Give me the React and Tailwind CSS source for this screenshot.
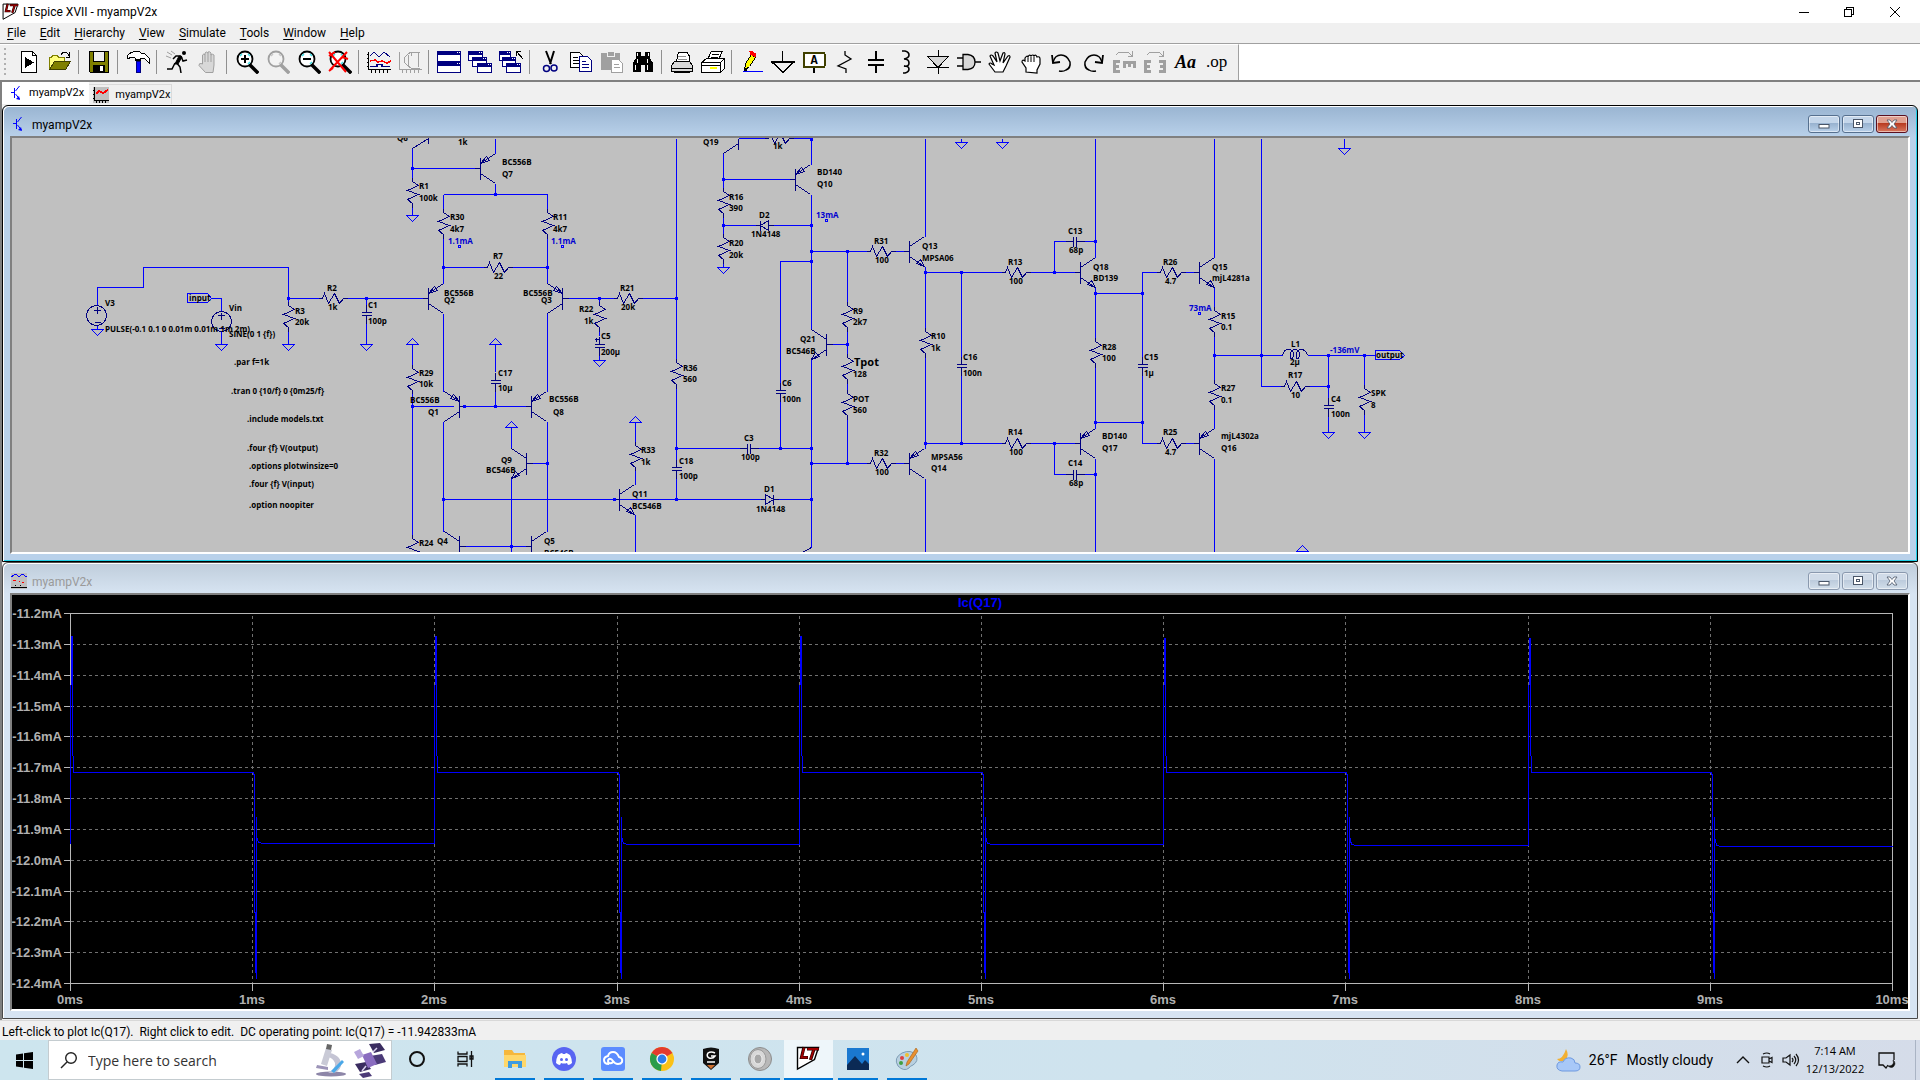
import React from "react";

const BLUE = "#0000ff";
const NAVY = "#000080";

/* ---------- toolbar icons (24 x 24) ---------- */

function Svg({ children, smooth }) {
  return (
    <svg
      width="24"
      height="24"
      viewBox="0 0 24 24"
      fill="none"
      stroke="#000"
      shapeRendering={smooth ? "auto" : "crispEdges"}
      aria-hidden="true"
    >
      {children}
    </svg>
  );
}

function Lens({ color = "#000", glass = "#fff", shine = "#40e0e8", children }) {
  return (
    <Svg smooth>
      <path d="M15 15l7 7" stroke={color} strokeWidth="3.5" strokeLinecap="square" />
      <circle cx="10" cy="9" r="7.5" fill={glass} stroke={color} strokeWidth="1.800" />
      <path d="M5 6l2-2M13 14l2-2M13 4l2 2" stroke={shine} strokeWidth="1.5" />
      {children}
    </Svg>
  );
}

function MiniWindow({ x, y, w = 13, h = 10 }) {
  return (
    <g stroke="none">
      <rect x={x} y={y} width={w} height={h} fill="#000080" />
      <rect x={x + 1} y={y + 4} width={w - 2} height={h - 5} fill="#fff" />
      <rect x={x + w - 4} y={y + 1} width="1" height="1" fill="#fff" />
      <rect x={x + w - 2} y={y + 1} width="1" height="1" fill="#fff" />
    </g>
  );
}

const icons = {
  play: (
    <Svg>
      <path d="M4.500 1.500h11l4 4v17h-15z" fill="#fff" />
      <path d="M15.500 1.500v4h4" />
      <path d="M8 7v11l9-5.500z" fill="#000" stroke="none" />
    </Svg>
  ),
  open: (
    <Svg>
      <path d="M1.500 19V7.500h2l1-2h5l1 2h6v4" fill="#ffff80" stroke="#808000" />
      <path d="M1.500 19.500l5-8h16l-5 8z" fill="#808000" stroke="#404000" />
      <path d="M13 4.500c2-3 6-3 8 1M21.500 2v5h-4" />
    </Svg>
  ),
  save: (
    <Svg>
      <path d="M2.500 1.500h19v21h-18l-1-1z" fill="#808000" />
      <rect x="6.500" y="1.500" width="11" height="10" fill="#f0f0f0" />
      <rect x="6" y="15" width="12" height="7" fill="#000" stroke="none" />
      <rect x="13" y="16" width="3" height="5" fill="#fff" stroke="none" />
    </Svg>
  ),
  hammer: (
    <Svg>
      <path d="M1 6c3-4 7-5 12-5l2 2h3l2 2 3 3v5l-3-3-2-2h-4v2h-5V8L5 7l-3 2z" fill="#fff" />
      <rect x="10" y="11" width="4" height="11" fill="#0000ff" stroke="#000080" />
      <path d="M10 10h5" strokeWidth="2" />
    </Svg>
  ),
  run: (
    <Svg smooth>
      <circle cx="19" cy="3" r="2" fill="#000" stroke="none" />
      <path d="M16 6h-5l-3 3M16 6l2 5 4-1" strokeWidth="1.500" />
      <path d="M11 12l4 5 1 6M10 13l-3 6H2" strokeWidth="1.500" />
      <path d="M14 6l-4 8 3 0 4-7z" fill="#000" />
      <path d="M2 2l5 3M1 6l5 2M6 1l4 3" stroke="#a0a0a0" />
    </Svg>
  ),
  halt: (
    <Svg smooth>
      <path
        d="M6.500 14V5q1.500-2 2.500 0V3q1.500-2 3 0V2q1.500-1 3 1v2q1.500-1.500 3 0v10l-1 7.500H9.500L3 15.500q0-2.500 2-2z"
        fill="#d8d8d8"
        stroke="#a0a0a0"
      />
      <path d="M9 5v7M12 3v9M15 4v8" stroke="#a0a0a0" />
    </Svg>
  ),
  zoomIn: (
    <Lens>
      <path d="M10 5v8M6 9h8" strokeWidth="2" />
    </Lens>
  ),
  pan: <Lens color="#a0a0a0" glass="#f4f4f4" shine="#c8c8c8" />,
  zoomOut: (
    <Lens>
      <path d="M6 9h8" strokeWidth="2" />
    </Lens>
  ),
  zoomFit: (
    <Lens>
      <path d="M1 2l17 20M19 2L2 20M1 6l6-4M14 7l6 2M5 18l-4 3" stroke="#ff0000" strokeWidth="2" />
    </Lens>
  ),
  plot: (
    <Svg>
      <path d="M1.500 2v17.500H24M4 20v3M8 20v3M12 20v3M16 20v3M20 20v3M0 4h2M0 8h2M0 12h2M0 16h2" />
      <path d="M3 6l4-4 5 5 5-5 6 5" stroke="#000080" />
      <path d="M3 11l5-1 3 2 4-1 5 2 4-2" stroke="#ff0000" strokeWidth="1.500" />
      <path d="M3 16.500h7v-2h5v2h8" stroke="#000080" strokeWidth="1.500" />
    </Svg>
  ),
  fft: (
    <Svg>
      <g stroke="#a0a0a0">
        <path d="M1.500 2v17.500H24M4 20v3M8 20v3M12 20v3M16 20v3M20 20v3" />
        <path d="M22 2h-9q-7 4-7 8t7 8h9M10 5v12M13 2v4M20.500 3v14" />
      </g>
    </Svg>
  ),
  tile: (
    <Svg>
      <MiniWindow x={0} y={1} w={24} h={11} />
      <MiniWindow x={0} y={12} w={24} h={11} />
    </Svg>
  ),
  cascade: (
    <Svg>
      <MiniWindow x={0} y={1} w={15} />
      <MiniWindow x={4} y={7} w={15} />
      <MiniWindow x={9} y={13} w={15} />
    </Svg>
  ),
  closeAll: (
    <Svg>
      <MiniWindow x={0} y={1} w={12} />
      <MiniWindow x={3} y={7} w={14} />
      <MiniWindow x={7} y={13} w={15} />
      <path d="M17.500 6V1.500H22M18 2l6 7" />
    </Svg>
  ),
  cut: (
    <Svg smooth>
      <path d="M8 1l5 13M16 1l-4 13" strokeWidth="2" />
      <circle cx="8.500" cy="18.500" r="3" stroke="#000080" strokeWidth="1.500" />
      <circle cx="16" cy="18" r="3" stroke="#000080" strokeWidth="1.500" />
    </Svg>
  ),
  copy: (
    <Svg>
      <path d="M1.500 2.500h9l4 4v11h-13z" fill="#fff" />
      <path d="M4 7.500h5M4 10.500h7M4 13.500h7" />
      <path d="M10.500 6.500h8l4 4v11h-12z" fill="#fff" stroke="#000080" />
      <path d="M13 11.500h4M13 14.500h7M13 17.500h7" stroke="#000080" />
    </Svg>
  ),
  paste: (
    <Svg>
      <rect x="1" y="3" width="19" height="17" fill="#a0a0a0" stroke="none" />
      <rect x="7" y="1" width="7" height="5" fill="#a0a0a0" stroke="#f0f0f0" />
      <path d="M11.500 9.500h7l4 4v9h-11z" fill="#fff" stroke="#a0a0a0" />
      <path d="M14 14.500h5M14 17.500h6" stroke="#a0a0a0" />
    </Svg>
  ),
  find: (
    <Svg>
      <path d="M5 2h5v4h4V2h5v6l3 5v9h-8v-7h-4v7H2v-9l3-5z" fill="#000" stroke="none" />
      <path d="M6.500 3v3M17.500 3v3M6 9v4M16 9v4M4 15v5M16 15v5" stroke="#fff" />
    </Svg>
  ),
  print: (
    <Svg>
      <path d="M6.500 12l2-10h8l3 4v6" fill="#fff" />
      <path d="M8 6h8M8 9h9" stroke="#909090" />
      <path d="M4.500 11.500h15l3 4v6h-21v-6z" fill="#d8d8d8" />
      <path d="M1 18.500h22M4 22.500h16" />
    </Svg>
  ),
  setup: (
    <Svg>
      <path d="M6.500 10l4-9h11l-4 9z" fill="#fff" />
      <path d="M11 4.500h7M10 7.500h7" />
      <path d="M0.500 12.500l5-4h18l-4 4zM.5 12.500h19v10H.5zM19.500 12.500l4-4v10l-4 4z" fill="#fff" />
      <path d="M1 15.500h18" />
      <rect x="9" y="17" width="7" height="2" fill="#ffff00" stroke="none" />
    </Svg>
  ),
  pencil: (
    <Svg>
      <path d="M4.500 20.500l1-7 6-9 4 3-6 9z" fill="#ffff00" />
      <path d="M10 1.500h2l3 2v3l-4-2z" fill="#ff0000" stroke="#ff0000" />
      <path d="M4 17v4h3z" fill="#000" />
      <path d="M3 21.500h20" stroke="#0000ff" />
    </Svg>
  ),
  ground: (
    <Svg>
      <path d="M11.500 1v12" />
      <path d="M1 12h22L12 22.500z" strokeWidth="1.500" />
    </Svg>
  ),
  label: (
    <Svg>
      <rect x="1.500" y="3" width="21" height="14" rx="1" fill="#fff" stroke="#404000" strokeWidth="2" />
      <path d="M12 18v5" strokeWidth="1.500" />
      <text x="12" y="14" textAnchor="middle" className="fill-black stroke-none font-['Liberation_Mono'] text-[12px] font-bold">
        A
      </text>
    </Svg>
  ),
  resistor: (
    <Svg smooth>
      <path d="M12 1v4l6 4-13 7 8 3v4" strokeWidth="1.300" />
    </Svg>
  ),
  capacitor: (
    <Svg>
      <path d="M12 1v9M12 15v8M4 10h16M4 15h16" strokeWidth="2" />
    </Svg>
  ),
  inductor: (
    <Svg smooth>
      <path d="M7 1h3q4 1 4 4t-5 4q5 0 5 4t-5 3q5 0 5 3t-4 4H8" strokeWidth="1.600" />
    </Svg>
  ),
  diode: (
    <Svg>
      <path d="M12 0v24M1 17.500h22" />
      <path d="M1.500 6.500h21L12 17.500z" fill="#d8d8d8" />
    </Svg>
  ),
  gate: (
    <Svg smooth>
      <path d="M0 8h6M0 16h6M17 12h7" strokeWidth="1.300" />
      <path d="M6 4.500h5q7 1 7 7.500t-7 7.500H6z" fill="#d8d8d8" strokeWidth="1.300" />
    </Svg>
  ),
  move: (
    <Svg smooth>
      <path
        d="M7 22l-6-8q1-2 3 0l2 1L2 6q1-2 3 0l4 6L7 3q1-2 3 0l2 8 3-8q2-1 2 1l-2 9 5-7q2-1 2 1l-4 9-3 6z"
        fill="#fff"
        strokeWidth="1.200"
      />
    </Svg>
  ),
  drag: (
    <Svg smooth>
      <path
        d="M7 22v-4l-4-6q0-3 3-1V8q2-3 3-1 1-3 3-1 2-2 3 0 2-2 3 1 3-1 3 2v5l-3 6v3z"
        fill="#fff"
        strokeWidth="1.200"
      />
      <path d="M9 8v4M12 7v5M15 7v5" />
    </Svg>
  ),
  undo: (
    <Svg smooth>
      <path d="M3 12q2-7 8-7t9 7q1 6-4 8-3 2-7 1" strokeWidth="1.500" />
      <path d="M2 5l1 8 7-1" strokeWidth="1.800" />
    </Svg>
  ),
  redo: (
    <Svg smooth>
      <path d="M21 12q-2-7-8-7t-9 7q-1 6 4 8 3 2 7 1" strokeWidth="1.500" />
      <path d="M22 5l-1 8-7-1" strokeWidth="1.800" />
    </Svg>
  ),
  rotate: (
    <Svg>
      <g stroke="#a0a0a0">
        <path d="M4 5l3-3h9l4 4M20.500 1v5H16" />
        <g strokeWidth="3">
          <path d="M8 11.500H2.500v10H8M3 16.500h4" />
          <path d="M22.500 18v-5.500h-10V18M17.500 13v4" />
        </g>
      </g>
    </Svg>
  ),
  mirror: (
    <Svg>
      <g stroke="#a0a0a0">
        <path d="M4 5l3-3h9l4 4M20.500 1v5H16" />
        <g strokeWidth="3">
          <path d="M8 11.500H2.500v10H8M3 16.500h4" />
          <path d="M16 11.500h5.500v10H16M21 16.500h-4" />
        </g>
      </g>
    </Svg>
  ),
  text: <span className="font-['Liberation_Serif'] text-[18px] leading-6 font-bold italic">Aa</span>,
  op: <span className="font-['Liberation_Serif'] text-[17px] leading-6">.op</span>,
};

const toolbar = [
  ["play", "New schematic"], ["open", "Open"], null,
  ["save", "Save"], null,
  ["hammer", "Control panel"], null,
  ["run", "Run"], ["halt", "Halt"], null,
  ["zoomIn", "Zoom in"], ["pan", "Pan"], ["zoomOut", "Zoom out"], ["zoomFit", "Zoom full extents"], null,
  ["plot", "Autorange"], ["fft", "Plot settings"], null,
  ["tile", "Tile windows"], ["cascade", "Cascade windows"], ["closeAll", "Close all"], null,
  ["cut", "Cut"], ["copy", "Copy"], ["paste", "Paste"], ["find", "Find"], null,
  ["print", "Print"], ["setup", "Print setup"], null,
  ["pencil", "Draw wire"], ["ground", "Place ground"], ["label", "Label net"], ["resistor", "Resistor"],
  ["capacitor", "Capacitor"], ["inductor", "Inductor"], ["diode", "Diode"], ["gate", "Component"],
  ["move", "Move"], ["drag", "Drag"], ["undo", "Undo"], ["redo", "Redo"], ["rotate", "Rotate"],
  ["mirror", "Mirror"], ["text", "Text"], ["op", "SPICE directive"],
];

function LogoShapes() {
  return (
    <g fill="none">
      <path d="M1.500 1.500h21l-4 12-17 9.500z" fill="#fff" stroke="#000" strokeWidth="1.400" />
      <path d="M8 1L5.500 11.500H12M11 3h12M18 3l-3.500 11" stroke="#200" strokeWidth="3.200" />
      <path d="M8 2L5.500 11.500H11.500M11.500 3h11M18 3l-3.500 10.500" stroke="#a00000" strokeWidth="1.800" />
    </g>
  );
}

function TransistorIcon() {
  return (
    <svg width="16" height="16" viewBox="0 0 16 16" fill="none" stroke={BLUE} aria-hidden="true">
      <path d="M2 7.500h4M6.500 6l4-5M6.500 9l4 5M5.500 3v10" />
      <path d="M11 15l-4-1 3-3z" fill={BLUE} stroke="none" />
    </svg>
  );
}

function PlotIcon() {
  return (
    <svg width="16" height="16" viewBox="0 0 16 16" fill="none" shapeRendering="crispEdges" aria-hidden="true">
      <rect width="16" height="16" fill="#c0c0c0" />
      <path d="M1.500 0v13.500H16M3.500 14v2M6.500 14v2M9.500 14v2M12.500 14v2M0 3.500h2M0 7.500h2M0 11.500h2" stroke="#000" />
      <path d="M3 7l3-3 4 2 5-3" stroke="#ff0000" strokeWidth="2" />
    </svg>
  );
}

function WaveIcon() {
  return (
    <svg width="16" height="16" viewBox="0 0 16 16" fill="none" shapeRendering="crispEdges" aria-hidden="true">
      <rect width="16" height="16" fill="#c0c0c0" />
      <path d="M0 4l3-2 2-1 3 3 3-3 5 3" stroke="#0000ff" />
      <path d="M2 7.500h3M8 8.500h1M11 9.500h2" stroke="#ff0000" strokeWidth="1.500" />
      <path d="M0 14.500h16M4 12h1M9 12h1" stroke="#000" />
    </svg>
  );
}

/* ---------- schematic symbols ---------- */

const W = ({ p }) => <polyline points={p} stroke={BLUE} />;
const Sym = ({ d }) => <path d={d} stroke={NAVY} />;
const RV = ({ x, y }) => <Sym d={`M${x} ${y - 4}v4l6 4-11 5 11 4-11 5 5 4v4`} />;
const RH = ({ x, y }) => <Sym d={`M${x - 4} ${y}h4l2-5 4 10 6-10 5 10 4-5h5`} />;
const CV = ({ x, y }) => <Sym d={`M${x} ${y - 8}v8M${x - 5} ${y}h10M${x - 5} ${y + 3}h10M${x} ${y + 3}v8`} />;
const CH = ({ x, y }) => <Sym d={`M${x - 8} ${y}h8M${x} ${y - 5}v10M${x + 3} ${y - 5}v10M${x + 3} ${y}h8`} />;
const Gnd = ({ x, y }) => <path d={`M${x - 6} ${y}h12l-6 6z`} stroke={BLUE} />;
const Up = ({ x, y }) => <path d={`M${x - 6} ${y}h12l-6-6z`} stroke={BLUE} />;
const Node = ({ x, y }) => <rect x={x - 1.5} y={y - 1.5} width="3" height="3" fill={BLUE} stroke="none" />;
const Q = ({ x, y, left, npn, none }) => (
  <g transform={`translate(${x} ${y})${left ? " scale(-1 1)" : ""}`} stroke={NAVY}>
    <path d="M-6 0h6M0-11v22M0-5l15-10M0 5l15 10" />
    {!none && (npn ? <path d="M15 15l-8-3 4-4z" /> : <path d="M0-5l6-7 3 4z" />)}
  </g>
);

const wires = [
  "97,305 97,287 143,287 143,267 288,267 288,301", "97,325 97,329", "211,298 221,298 221,311", "221,331 221,344",
  "288,298 318,298", "347,298 422,298", "288,331 288,344", "366,298 366,304", "366,323 366,344",
  "412,148 412,177", "412,168 474,168", "412,207 412,215", "443,194 443,208", "443,238 443,283",
  "495,138 495,153", "495,183 495,194", "443,194 547,194 547,208", "547,238 547,283", "443,267 483,267",
  "512,267 547,267", "443,313 443,391", "547,313 547,391", "568,298 613,298", "642,298 676,298", "599,298 599,301",
  "599,331 599,335", "599,355 599,360", "412,344 412,364", "412,393 412,534", "412,406 453,406", "459,406 525,406",
  "495,344 495,371", "495,391 495,406", "443,421 443,531", "547,421 547,531", "511,427 511,448", "511,478 511,552",
  "532,463 547,463", "443,499 765,499", "635,422 635,441", "635,470 635,484", "635,514 635,552", "465,546 525,546",
  "676,138 676,358", "676,388 676,459", "676,478 676,499", "738,138 764,138", "793,138 811,138 811,164",
  "723,153 723,187", "723,179 789,179", "811,194 811,329", "723,217 723,233", "723,263 723,267", "723,225 755,225",
  "773,225 811,225", "811,251 866,251", "895,251 903,251", "847,251 847,301", "847,331 847,353", "847,383 847,389",
  "847,419 847,463", "832,344 847,344", "811,359 811,547", "811,261 780,261 780,382", "780,401 780,448",
  "676,448 739,448", "758,448 811,448", "811,463 866,463", "895,463 903,463", "778,499 811,499", "925,138 925,236",
  "925,266 925,327", "925,357 925,448", "925,478 925,552", "925,272 1001,272", "961,272 961,356", "961,375 961,443",
  "925,443 1001,443", "1030,272 1074,272", "1030,443 1074,443", "1054,272 1054,241 1065,241", "1084,241 1095,241",
  "1054,443 1054,474 1065,474", "1084,474 1095,474", "1095,138 1095,257", "1095,287 1095,337", "1095,367 1095,428",
  "1095,458 1095,552", "1095,293 1142,293", "1095,422 1142,422", "1156,272 1142,272 1142,356",
  "1142,375 1142,443 1156,443", "1185,272 1193,272", "1185,443 1193,443", "1214,138 1214,257", "1214,287 1214,306",
  "1214,336 1214,379", "1214,409 1214,428", "1214,458 1214,552", "1214,355 1282,355", "1307,355 1375,355",
  "1261,138 1261,386 1280,386", "1309,386 1328,386", "1328,355 1328,397", "1328,416 1328,432", "1364,355 1364,384",
  "1364,414 1364,432", "961,138 961,142", "1002,138 1002,142", "1344,138 1344,148",
];

const nodes = [
  [288, 298], [366, 298], [412, 168], [495, 194], [443, 267], [547, 267], [599, 298], [676, 298], [412, 406],
  [464, 406], [495, 406], [443, 499], [547, 463], [614, 499], [676, 499], [511, 546], [811, 139], [723, 179],
  [723, 225], [811, 225], [811, 251], [847, 251], [811, 261], [780, 448], [811, 448], [676, 448], [847, 344],
  [811, 463], [847, 463], [811, 499], [925, 272], [961, 272], [925, 443], [961, 443], [1054, 272], [1054, 443],
  [1095, 241], [1095, 474], [1095, 293], [1142, 293], [1095, 422], [1142, 422], [1214, 355], [1261, 355],
  [1328, 355], [1364, 355], [1328, 386],
];

const verticalResistors = [
  [288, 305], [412, 181], [443, 212], [547, 212], [599, 305], [412, 368], [412, 538], [635, 445], [676, 362],
  [723, 191], [723, 237], [847, 305], [847, 357], [847, 393], [925, 331], [1095, 341], [1214, 310], [1214, 383],
  [1364, 388],
];
const horizontalResistors = [
  [322, 298], [487, 267], [617, 298], [768, 138], [870, 251], [870, 463], [1005, 272], [1005, 443], [1160, 272],
  [1160, 443], [1284, 386],
];
const verticalCaps = [[366, 312], [495, 380], [599, 344], [676, 467], [780, 390], [961, 364], [1142, 364], [1328, 405]];
const horizontalCaps = [[747, 448], [1073, 241], [1073, 474]];
const grounds = [
  [97, 329], [221, 344], [288, 344], [366, 344], [412, 215], [599, 360], [723, 267], [961, 142], [1002, 142],
  [1344, 148], [1328, 432], [1364, 432],
];
const risers = [[412, 344], [495, 344], [511, 427], [635, 422], [1302, 551]];

const labels = [
  [105, 306, "V3"], [105, 332, "PULSE(-0.1 0.1 0 0.01m 0.01m 1m 2m)"], [189, 301, "input"], [229, 311, "Vin"],
  [229, 337, "SINE(0 1 {f})"], [234, 365, ".par f=1k"], [231, 394, ".tran 0 {10/f} 0 {0m25/f}"],
  [247, 422, ".include models.txt"], [247, 451, ".four {f} V(output)"], [249, 469, ".options plotwinsize=0"],
  [249, 487, ".four {f} V(input)"], [249, 508, ".option noopiter"], [295, 314, "R3"], [295, 325, "20k"],
  [327, 291, "R2"], [328, 310, "1k"], [368, 308, "C1"], [368, 324, "100p"], [397, 141, "Q6"], [419, 189, "R1"],
  [419, 201, "100k"], [450, 220, "R30"], [450, 232, "4k7"], [458, 145, "1k"], [502, 165, "BC556B"], [502, 177, "Q7"],
  [553, 220, "R11"], [553, 232, "4k7"], [493, 259, "R7"], [494, 279, "22"], [444, 296, "BC556B"], [444, 303, "Q2"],
  [523, 296, "BC556B"], [541, 303, "Q3"], [620, 291, "R21"], [621, 310, "20k"], [579, 312, "R22"], [584, 324, "1k"],
  [601, 339, "C5"], [601, 355, "200µ"], [419, 376, "R29"], [419, 387, "10k"], [410, 403, "BC556B"], [428, 415, "Q1"],
  [419, 546, "R24"], [437, 544, "Q4"], [498, 376, "C17"], [498, 391, "10µ"], [549, 402, "BC556B"], [553, 415, "Q8"],
  [501, 463, "Q9"], [486, 473, "BC546B"], [641, 453, "R33"], [641, 465, "1k"], [632, 497, "Q11"],
  [632, 509, "BC546B"], [544, 544, "Q5"], [544, 556, "BC546B"], [683, 371, "R36"], [683, 382, "560"],
  [679, 464, "C18"], [679, 479, "100p"], [703, 145, "Q19"], [773, 149, "1k"], [817, 175, "BD140"], [817, 187, "Q10"],
  [729, 200, "R16"], [729, 211, "390"], [729, 246, "R20"], [729, 258, "20k"], [759, 218, "D2"], [751, 237, "1N4148"],
  [874, 244, "R31"], [875, 263, "100"], [922, 249, "Q13"], [922, 261, "MPSA06"], [931, 339, "R10"], [931, 351, "1k"],
  [963, 360, "C16"], [963, 376, "100n"], [782, 386, "C6"], [782, 402, "100n"], [744, 441, "C3"], [741, 460, "100p"],
  [853, 314, "R9"], [853, 325, "2k7"], [853, 377, "128"], [853, 402, "POT"], [853, 413, "560"], [800, 342, "Q21"],
  [786, 354, "BC546B"], [874, 456, "R32"], [875, 475, "100"], [931, 460, "MPSA56"], [931, 471, "Q14"],
  [764, 492, "D1"], [756, 512, "1N4148"], [1008, 265, "R13"], [1009, 284, "100"], [1068, 234, "C13"],
  [1069, 253, "68p"], [1093, 270, "Q18"], [1093, 281, "BD139"], [1102, 350, "R28"], [1102, 361, "100"],
  [1163, 265, "R26"], [1165, 284, "4.7"], [1212, 270, "Q15"], [1212, 281, "mjL4281a"], [1144, 360, "C15"],
  [1144, 376, "1µ"], [1102, 439, "BD140"], [1102, 451, "Q17"], [1008, 435, "R14"], [1009, 455, "100"],
  [1068, 466, "C14"], [1069, 486, "68p"], [1163, 435, "R25"], [1165, 455, "4.7"], [1221, 319, "R15"],
  [1221, 330, "0.1"], [1221, 391, "R27"], [1221, 403, "0.1"], [1221, 439, "mjL4302a"], [1221, 451, "Q16"],
  [1291, 347, "L1"], [1290, 365, "2µ"], [1288, 378, "R17"], [1291, 398, "10"], [1331, 402, "C4"], [1331, 417, "100n"],
  [1371, 396, "SPK"], [1371, 408, "8"], [1376, 358, "output"],
];
const readings = [
  [448, 244, "1.1mA"], [551, 244, "1.1mA"], [816, 218, "13mA"], [1189, 311, "73mA"], [1330, 353, "-136mV"],
];
const probes = [[459, 246], [562, 246], [826, 220], [1199, 313]];

function Schematic() {
  return (
    <svg className="block h-full w-full bg-[#c0c0c0]" fill="none" role="img" aria-label="Amplifier schematic">
      <g transform="translate(-11.5 -137.5)" shapeRendering="crispEdges">
        {verticalResistors.map(([x, y]) => <RV key={`${x}-${y}`} x={x} y={y} />)}
        {horizontalResistors.map(([x, y]) => <RH key={`${x}-${y}`} x={x} y={y} />)}
        {verticalCaps.map(([x, y]) => <CV key={`${x}-${y}`} x={x} y={y} />)}
        {horizontalCaps.map(([x, y]) => <CH key={`${x}-${y}`} x={x} y={y} />)}
        {grounds.map(([x, y]) => <Gnd key={`${x}-${y}`} x={x} y={y} />)}
        {risers.map(([x, y]) => <Up key={`${x}-${y}`} x={x} y={y} />)}
        {wires.map((p) => <W key={p} p={p} />)}

        <Q x={480} y={168} />
        <Q x={428} y={298} />
        <Q x={562} y={298} left />
        <Q x={459} y={406} left />
        <Q x={531} y={406} />
        <Q x={526} y={463} left npn />
        <Q x={619} y={499} npn />
        <Q x={459} y={546} left none />
        <Q x={531} y={546} none />
        <Q x={795} y={179} />
        <Q x={909} y={251} npn />
        <Q x={826} y={344} left npn />
        <Q x={909} y={463} />
        <Q x={1080} y={272} npn />
        <Q x={1080} y={443} />
        <Q x={1199} y={272} npn />
        <Q x={1199} y={443} />
        <Sym d="M412 148l16-10v5M723 153l15-10M738 138v11M811 547l-9 5" />

        <circle cx="96" cy="315" r="10" stroke={NAVY} />
        <circle cx="221" cy="321" r="10" stroke={NAVY} />
        <Sym d="M93 310h7M97 306v7M94 322h6M217 315h7M221 312v7M218 328h6M594 339h4M596 337v4" />
        <Sym d="M755 225h5M760 220v10M768 220v10l-8-5zM768 225h5" />
        <Sym d="M760 499h5M765 494v10l8-5zM773 494v10M773 499h5" />
        <path
          d="M1282 355q1-6 6-6 5 0 5 5t-3 4q-1-9 4-9 5 0 5 5t-3 4q-1-9 4-9 6 0 7 6"
          stroke={NAVY}
        />
        <path d="M187 293h20l4 5-4 4h-20zM1375 350h24l5 5-5 4h-24z" stroke={BLUE} />
        {probes.map(([x, y]) => <rect key={x} x={x - 1} y={y - 1} width="2" height="2" stroke={BLUE} />)}
        {nodes.map(([x, y]) => <Node key={`${x}-${y}`} x={x} y={y} />)}
      </g>
      <g transform="translate(-12 -138)" className="fill-black font-['Open_Sans','Noto_Sans',sans-serif] text-[8px] font-bold">
        {labels.map(([x, y, t]) => <text key={`${x}-${y}`} x={x} y={y}>{t}</text>)}
        <text x="854" y="366" className="text-[11px]">Tpot</text>
      </g>
      <g transform="translate(-12 -138)" className="fill-[#0000d0] font-['Open_Sans','Noto_Sans',sans-serif] text-[8px] font-bold">
        {readings.map(([x, y, t]) => <text key={x} x={x} y={y}>{t}</text>)}
      </g>
    </svg>
  );
}

/* ---------- waveform ---------- */

const gridX = [70, 252, 434, 617, 799, 981, 1163, 1345, 1528, 1710, 1892];
const gridY = [613, 644, 675, 706, 736, 767, 798, 829, 860, 891, 921, 952, 983];

const rise = (x, low, top) =>
  `${x},${low} ${x},705 ${x + 1},665 ${x + 1},${top} ${x + 2},${top} ${x + 2},751 ${x + 3},760 ${x + 3},772`;
const fall = (x, low) =>
  `${x + 1},772 ${x + 2},776 ${x + 2},912 ${x + 3},912 ${x + 3},967 ${x + 4},978 ${x + 4},816 ${x + 4},836 ${x + 6},${low - 1} ${x + 11},${low}`;

const trace = [
  rise(70, 843, 636), fall(252, 843), rise(434, 843, 636), fall(617, 844), rise(799, 844, 636), fall(981, 844),
  rise(1163, 844, 638), fall(1345, 845), rise(1528, 845, 638), fall(1710, 846), "1892,846",
].join(" ");

function Waveform() {
  return (
    <svg
      className="block h-full w-full bg-black"
      viewBox="12 595 1896 414"
      fill="none"
      role="img"
      aria-label="Ic(Q17) over time"
    >
      <g transform="translate(.5 .5)" shapeRendering="crispEdges">
        <g stroke="#707070" strokeDasharray="3 3">
          {gridX.slice(1, -1).map((x) => <path key={x} d={`M${x} 615V983`} />)}
          {gridY.slice(1, -1).map((y) => <path key={y} d={`M70 ${y}H1892`} />)}
        </g>
        <g stroke="#b8b8b8">
          <rect x="70" y="613" width="1822" height="370" />
          {gridX.map((x) => <path key={x} d={`M${x} 983v7`} />)}
          {gridY.map((y) => <path key={y} d={`M63 ${y}h7`} />)}
        </g>
        <polyline points={trace} stroke={BLUE} />
      </g>
      <g className="fill-[#b0b0b0] font-['Liberation_Sans',Arial,sans-serif] text-[13px] font-bold">
        {gridY.map((y, i) => (
          <text key={y} x="62" y={y + 5} textAnchor="end">{`-${(11.2 + i / 10).toFixed(1)}mA`}</text>
        ))}
        {gridX.map((x, i) => <text key={x} x={x} y="1004" textAnchor="middle">{`${i}ms`}</text>)}
        <text x="980" y="607" textAnchor="middle" className="fill-[#0000ff]">Ic(Q17)</text>
      </g>
    </svg>
  );
}

/* ---------- child windows ---------- */

function CaptionButton({ label, close, active, children }) {
  let tone = "border-[#8a99ae] bg-[linear-gradient(#d0dbe8_45%,#bccbdc_46%,#d2deea)]";
  if (active) tone = "border-[#56708f] bg-[linear-gradient(#c4d6ea_45%,#98b2cf_46%,#b9d1ea)]";
  if (active && close) tone = "border-[#5a1020] bg-[linear-gradient(#e0a090_45%,#b83a20_46%,#d87860)]";
  return (
    <button
      type="button"
      aria-label={label}
      className={`flex h-[18px] w-8 items-center justify-center rounded-[3px] border shadow-[inset_0_0_0_1px_rgba(255,255,255,0.5)] ${tone}`}
    >
      <svg width="12" height="10" viewBox="0 0 12 10" fill="none" aria-hidden="true">{children}</svg>
    </button>
  );
}

function ChildWindow({ active, icon, title, children }) {
  return (
    <section
      className={`flex min-h-0 flex-1 flex-col rounded-t-md border px-[6px] pb-[6px] ${
        active
          ? "border-black bg-[linear-gradient(#99b4d1,#b9d1ea_31px)] shadow-[inset_1px_1px_0_#fff,inset_-1px_-1px_0_#20d0e8]"
          : "border-[#4a4a4a] bg-[linear-gradient(#bfcddb,#d7e4f2_31px)] shadow-[inset_1px_1px_0_#fff]"
      }`}
    >
      <header className="mt-px flex h-[29px] shrink-0 items-center pt-1 pr-[3px] pl-[2px]">
        {icon}
        <h2 className={`mt-[2px] ml-[5px] flex-1 text-[12px] leading-4 ${active ? "text-black" : "text-[#9a9a9a]"}`}>
          {title}
        </h2>
        <div className="flex gap-[2px]">
          <CaptionButton label="Minimize" active={active}>
            <rect x="1" y="5.500" width="10" height="3.500" fill="#fff" stroke="#4a5668" />
          </CaptionButton>
          <CaptionButton label="Maximize" active={active}>
            <rect x="1.500" y=".5" width="9" height="8" fill="#fff" stroke="#4a5668" />
            <rect x="4.500" y="3.500" width="3" height="2" stroke="#4a5668" />
          </CaptionButton>
          <CaptionButton label="Close" active={active} close>
            <path d="M1 1h3l2 2.500L8 1h3L8 5l3 4H8L6 6.500 4 9H1l3-4z" fill="#fff" stroke="#4a5668" strokeWidth=".8" />
          </CaptionButton>
        </div>
      </header>
      <div className="mx-px mb-px min-h-0 flex-1 border-2 border-t-[#808080] border-r-white border-b-white border-l-[#808080]">
        {children}
      </div>
    </section>
  );
}

/* ---------- taskbar ---------- */

function TaskButton({ label, open, current, children }) {
  return (
    <button
      type="button"
      aria-label={label}
      className={`flex h-10 w-[49px] flex-col items-center justify-between ${current ? "bg-[#eef6fa]" : ""}`}
    >
      <span className="flex h-[38px] items-center">
        <svg width="26" height="26" viewBox="0 0 26 26" fill="none" aria-hidden="true">{children}</svg>
      </span>
      <span className={`h-[2px] ${current ? "w-full" : "w-10"} ${open ? "bg-[#0078d7]" : ""}`} />
    </button>
  );
}

function Taskbar() {
  return (
    <footer className="flex h-10 shrink-0 items-center bg-[linear-gradient(90deg,#cde5ee,#cfe3ee_60%,#d5dce9)]">
      <button type="button" aria-label="Start" className="flex h-10 w-12 items-center justify-center">
        <svg width="17" height="17" viewBox="0 0 17 17" aria-hidden="true">
          <path d="M0 2.500l7-1V8H0zM8 1.300L17 0v8H8zM0 9h7v6.500l-7-1zM8 9h9v8l-9-1.300z" />
        </svg>
      </button>
      <label className="flex h-10 w-[344px] items-center border border-[#c4ccd0] bg-white pl-[11px]">
        <svg width="18" height="18" viewBox="0 0 18 18" fill="none" stroke="#222" strokeWidth="1.400" aria-hidden="true">
          <circle cx="11" cy="7" r="5.300" />
          <path d="M7 11l-6 6" />
        </svg>
        <input
          type="text"
          aria-label="Search"
          placeholder="Type here to search"
          className="ml-[10px] w-[224px] bg-transparent text-[14px] font-['Open_Sans','Noto_Sans',sans-serif] text-black outline-none placeholder:text-[#333]"
        />
        <svg width="76" height="38" viewBox="0 0 76 38" aria-hidden="true">
          <ellipse cx="19" cy="33" rx="15" ry="2.500" fill="#8d86a8" />
          <path d="M18 12q12 3 11 13-2 6-8 7h-5q8-4 7-10-2-5-7-6z" fill="#c4c4d4" />
          <path d="M14 7l6 2-5 16-6-2z" fill="#c9cad6" />
          <path d="M15 3l5 1-1 5-5-1z" fill="#666" />
          <path d="M5 24l11 2v3L4 27z" fill="#9c94b8" />
          <path d="M19 30l11-11 2 2-10 11z" fill="#4aa8e8" />
          <path d="M57 3l11-1 5 7-11 3z" fill="#3a2c60" />
          <path d="M58 15l12-2 4 8-11 3z" fill="#4b3a78" />
          <path d="M43 23l11-2 5 7-11 3z" fill="#3a2c60" />
          <path d="M47 33l10-2 3 4-9 2z" fill="#4b3a78" />
          <path d="M50 14l9-3 6 12-9 4z" fill="#8a6cc0" />
          <path d="M42 11l6-3 4 7-6 3z" fill="#b7a6dc" />
          <path d="M61 11l4-4M54 25l-4 5" stroke="#d8d0ee" strokeWidth="1.500" />
        </svg>
      </label>
      <TaskButton label="Cortana">
        <circle cx="13" cy="13" r="7" stroke="#111" strokeWidth="2" />
      </TaskButton>
      <TaskButton label="Task View">
        <path d="M5 5.500V8h9V5.500M5 20.500V18h9v2.500M5 10.500h9v5H5zM18.500 5v16M17 10h3v3h-3z" stroke="#111" strokeWidth="1.300" />
      </TaskButton>
      <TaskButton label="File Explorer" open>
        <path d="M2 4h8l2 3h11v14H2z" fill="#f6b73c" />
        <path d="M2 9h22v12H2z" fill="#ffd76a" />
        <path d="M6 22v-7h14v7h-4v-4h-6v4z" fill="#3f9be0" />
      </TaskButton>
      <TaskButton label="Discord" open>
        <circle cx="13" cy="13" r="12" fill="#5865f2" />
        <path d="M7 9q3-2 4-2l1 1h2l1-1q1 0 4 2 2 4 2 8-2 2-4 2l-1-2q-3 1-6 0l-1 2q-2 0-4-2 0-4 2-8z" fill="#fff" />
        <circle cx="10.500" cy="13.500" r="1.500" fill="#5865f2" />
        <circle cx="15.500" cy="13.500" r="1.500" fill="#5865f2" />
      </TaskButton>
      <TaskButton label="Cloud storage" open>
        <rect x="1" y="1" width="24" height="24" rx="3" fill="#5b8cff" />
        <path d="M9 18q-5 0-5-4 0-3 4-4 1-4 5-4t6 5q4 1 3 5-1 2-4 2-3 0-5-3t-4-2q-2 2 0 4 2 1 4-1" stroke="#fff" strokeWidth="2" />
      </TaskButton>
      <TaskButton label="Chrome" open>
        <circle cx="13" cy="13" r="12" fill="#fbc116" />
        <path d="M13 13L2.600 7A12 12 0 0 1 23.400 7z" fill="#e33b2e" />
        <path d="M13 13L2.600 7A12 12 0 0 0 12 25z" fill="#2a9c4a" />
        <circle cx="13" cy="13" r="5.600" fill="#fff" />
        <circle cx="13" cy="13" r="4.400" fill="#2f7de9" />
      </TaskButton>
      <TaskButton label="G Hub" open>
        <path d="M5 3q8-3 16 0v14l-8 7-8-7z" fill="#111" />
        <path d="M17 7q-4-2-7 0-2 3 1 5 4 1 6-2h-4M9 16h8" stroke="#fff" strokeWidth="1.500" />
        <path d="M9 19h8l-4 4z" fill="#d07030" />
      </TaskButton>
      <TaskButton label="Speakers" open>
        <circle cx="13" cy="13" r="11.500" fill="#b8b8b8" stroke="#8c8c8c" />
        <ellipse cx="11" cy="13" rx="8" ry="9.500" fill="#d8d8d8" stroke="#999" />
        <ellipse cx="11" cy="13" rx="4" ry="5" fill="#a8a8a8" stroke="#eee" />
      </TaskButton>
      <TaskButton label="LTspice XVII" open current>
        <LogoShapes />
      </TaskButton>
      <TaskButton label="Photos" open>
        <rect x="2" y="2" width="22" height="22" fill="#1a78d0" />
        <path d="M2 19l8-9 7 8 3-4 4 4v6H2z" fill="#0b2a55" />
        <circle cx="18" cy="8" r="1.500" fill="#fff" />
      </TaskButton>
      <TaskButton label="Paint" open>
        <path d="M4 20q-5-8 4-13 9-4 14 2 3 6-3 10-3 1-4 3-5 4-11-2z" fill="#b8d0e0" stroke="#7d9db5" />
        <circle cx="8" cy="12" r="2" fill="#e04040" />
        <circle cx="7" cy="17" r="2" fill="#40a040" />
        <circle cx="13" cy="9" r="2" fill="#f0c030" />
        <path d="M22 2l2 3-9 13-3 2 1-4z" fill="#e89030" stroke="#a86010" strokeWidth=".6" />
      </TaskButton>

      <div className="ml-auto flex h-10 items-center font-['Open_Sans','Noto_Sans',sans-serif] text-black">
        <button type="button" className="flex items-center font-['Roboto','Noto_Sans',sans-serif] text-[14px] leading-5">
          <svg width="26" height="24" viewBox="0 0 26 24" aria-hidden="true">
            <path d="M11 1q4 7-1 11-5 3-8-1 6 0 9-10z" fill="#f2b032" />
            <path d="M7 23q-6-1-5-6 1-4 6-3 2-5 8-4 4 1 4 5 5 0 5 4t-5 4z" fill="#a8c8f8" stroke="#6f9ae0" />
          </svg>
          <span className="ml-2">26°F</span>
          <span className="ml-[9px]">Mostly cloudy</span>
        </button>
        <button type="button" aria-label="Show hidden icons" className="ml-[23px]">
          <svg width="14" height="8" viewBox="0 0 14 8" fill="none" stroke="#111" strokeWidth="1.400" aria-hidden="true">
            <path d="M1 7l6-6 6 6" />
          </svg>
        </button>
        <button type="button" aria-label="Meet now" className="ml-[10px]">
          <svg width="14" height="16" viewBox="0 0 14 16" fill="none" stroke="#111" strokeWidth="1.200" aria-hidden="true">
            <path d="M3 2q4-2 7 0M3 14q4 2 7 0M2 5h7v6H2zM9 7l3-1.500v5L9 9" />
          </svg>
        </button>
        <button type="button" aria-label="Volume" className="ml-2">
          <svg width="18" height="16" viewBox="0 0 18 16" fill="none" stroke="#111" strokeWidth="1.200" aria-hidden="true">
            <path d="M1 6v4h3l4 3V3L4 6zM10 6q2 2 0 4M12 4q3.500 4 0 8M14 2q5 6 0 12" />
          </svg>
        </button>
        <button type="button" className="ml-px w-[68px] text-center text-[11px] leading-[18px]">
          <span className="block">7:14 AM</span>
          <span className="block">12/13/2022</span>
        </button>
        <button type="button" aria-label="Notifications" className="ml-2">
          <svg width="20" height="18" viewBox="0 0 20 18" fill="none" stroke="#111" strokeWidth="1.300" aria-hidden="true">
            <path d="M17 9V2H2v12h4l3 3 2-3" />
            <path d="M16 9q2 6-5 6 5 4 7-2 0-3-2-4z" fill="#111" strokeWidth=".5" />
          </svg>
        </button>
        <span className="mr-1 ml-[18px] h-10 w-px bg-[#aab4c4]" />
      </div>
    </footer>
  );
}

const menus = ["File", "Edit", "Hierarchy", "View", "Simulate", "Tools", "Window", "Help"];

export default function App() {
  return (
    <div className="flex h-screen flex-col overflow-hidden bg-[#f0f0f0] font-['Roboto','Noto_Sans',sans-serif] text-[12px] text-black">
      <header className="flex h-[23px] shrink-0 items-center bg-white pl-[2px]">
        <svg width="17" height="17" viewBox="0 0 24 24" aria-hidden="true">
          <LogoShapes />
        </svg>
        <h1 className="ml-1 flex-1 text-[12px] leading-4">LTspice XVII - myampV2x</h1>
        <div className="flex">
          <button type="button" aria-label="Minimize" className="flex h-5 w-[45px] items-center justify-center">
            <svg width="10" height="10" viewBox="0 0 10 10" stroke="#000" shapeRendering="crispEdges"><path d="M0 5.500h10" /></svg>
          </button>
          <button type="button" aria-label="Restore" className="flex h-5 w-[46px] items-center justify-center">
            <svg width="10" height="10" viewBox="0 0 10 10" fill="none" stroke="#000" shapeRendering="crispEdges">
              <path d="M.5 2.500h7v7h-7zM2.500 2V.5h7v7H8" />
            </svg>
          </button>
          <button type="button" aria-label="Close" className="mr-[2px] flex h-5 w-[46px] items-center justify-center">
            <svg width="10" height="10" viewBox="0 0 10 10" stroke="#000"><path d="M0 0l10 10M10 0L0 10" /></svg>
          </button>
        </div>
      </header>

      <nav className="flex h-5 shrink-0 items-center">
        {menus.map((m) => (
          <button key={m} type="button" className="px-[7px] text-[12px] leading-4">
            <span className="underline underline-offset-2">{m[0]}</span>
            {m.slice(1)}
          </button>
        ))}
      </nav>

      <div className="flex h-[37px] shrink-0 border-t border-[#a0a0a0] bg-white">
        <div className="flex items-center border-t border-r border-t-white border-r-[#a0a0a0] bg-[#f0f0f0] pr-[6px] pb-[2px] pl-1">
          <span className="mr-[7px] h-7 w-[2px] bg-[repeating-linear-gradient(#b0b0b0_0_2px,#f0f0f0_2px_5px)]" />
          {toolbar.map((item, i) =>
            item ? (
              <button
                key={item[0]}
                type="button"
                aria-label={item[1]}
                title={item[1]}
                className="flex h-7 w-[31px] shrink-0 items-center justify-center"
              >
                {icons[item[0]]}
              </button>
            ) : (
              <span key={i} className="mr-1 ml-[3px] h-6 w-px bg-[#909090]" />
            )
          )}
        </div>
      </div>

      <main className="flex min-h-0 flex-1 flex-col border-t-2 border-l-2 border-t-[#808080] border-l-[#808080] pr-[2px] pb-px">
        <div className="flex h-[23px] shrink-0 items-start" role="tablist">
          <button type="button" role="tab" aria-selected="true" className="flex h-[22px] items-center bg-white pr-[5px] pl-[7px] text-[11px] leading-4">
            <TransistorIcon />
            <span className="ml-1">myampV2x</span>
          </button>
          <button
            type="button"
            role="tab"
            aria-selected="false"
            className="mt-[2px] flex h-5 items-center border-t border-r border-[#dadada] pr-px pl-1 text-[11px] leading-4"
          >
            <PlotIcon />
            <span className="ml-[6px]">myampV2x</span>
          </button>
        </div>
        <ChildWindow active icon={<TransistorIcon />} title="myampV2x">
          <Schematic />
        </ChildWindow>
        <ChildWindow icon={<WaveIcon />} title="myampV2x">
          <Waveform />
        </ChildWindow>
      </main>

      <div className="flex h-5 shrink-0 items-center border-t border-[#d8d8d8] pt-[2px] pl-[2px] text-[12px] leading-4 whitespace-pre" role="status">
        {"Left-click to plot Ic(Q17).  Right click to edit.  DC operating point: Ic(Q17) = -11.942833mA"}
      </div>

      <Taskbar />
    </div>
  );
}
